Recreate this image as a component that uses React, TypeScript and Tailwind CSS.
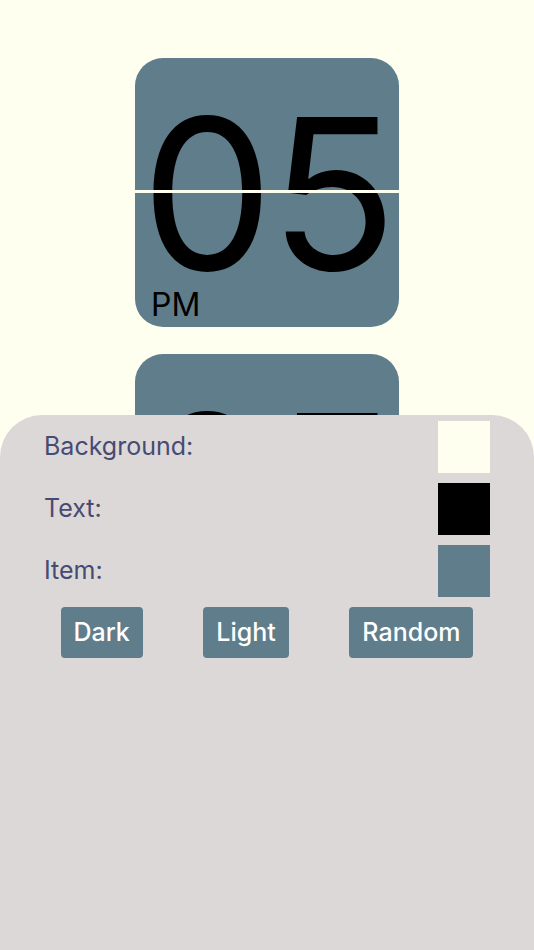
import { useState } from "react";

type Theme = {
  background: string;
  text: string;
  item: string;
};

const LIGHT: Theme = { background: "#fffff0", text: "#000000", item: "#607d8b" };

function FlipCard({ value, suffix, theme }: { value: string; suffix?: string; theme: Theme }) {
  return (
    <div
      className="relative flex h-[269px] w-[264px] shrink-0 items-center justify-center overflow-hidden rounded-[28px]"
      style={{ backgroundColor: theme.item, color: theme.text }}
    >
      <span className="pt-[3px] text-[210px] leading-none tracking-[-4px] [font-family:Inter,'Noto_Sans',sans-serif]">
        {value}
      </span>
      {/* split line across the card */}
      <div className="absolute inset-x-0 top-[132px] h-[3px]" style={{ backgroundColor: theme.background }} />
      {suffix ? (
        <span className="absolute bottom-[6px] left-[16px] text-[32px] leading-none [font-family:Inter,'Noto_Sans',sans-serif]">
          {suffix}
        </span>
      ) : null}
    </div>
  );
}

function ColorRow({ label, color }: { label: string; color: string }) {
  return (
    <div className="flex items-center justify-between">
      <span className="text-[25px] text-[#474b73]">{label}</span>
      <div className="h-[52px] w-[52px]" style={{ backgroundColor: color }} />
    </div>
  );
}

export default function App() {
  const [theme] = useState<Theme>(LIGHT);

  return (
    <div
      className="relative h-[950px] w-full overflow-hidden [font-family:Inter,'Noto_Sans',sans-serif]"
      style={{ backgroundColor: theme.background }}
    >
      <div className="flex flex-col items-center gap-[27px] pt-[58px]">
        <FlipCard value="05" suffix="PM" theme={theme} />
        <FlipCard value="05" theme={theme} />
      </div>

      <div className="absolute inset-x-0 bottom-0 top-[415px] rounded-t-[42px] bg-[#dcd8d8]">
        <div className="flex flex-col gap-[10px] px-[44px] pt-[6px]">
          <ColorRow label="Background:" color={theme.background} />
          <ColorRow label="Text:" color={theme.text} />
          <ColorRow label="Item:" color={theme.item} />
        </div>
        <div className="mt-[10px] flex justify-evenly">
          {["Dark", "Light", "Random"].map((b) => (
            <button
              key={b}
              type="button"
              className="h-[51px] rounded-[4px] px-[13px] text-[25px] font-medium text-white"
              style={{ backgroundColor: theme.item }}
            >
              {b}
            </button>
          ))}
        </div>
      </div>
    </div>
  );
}
